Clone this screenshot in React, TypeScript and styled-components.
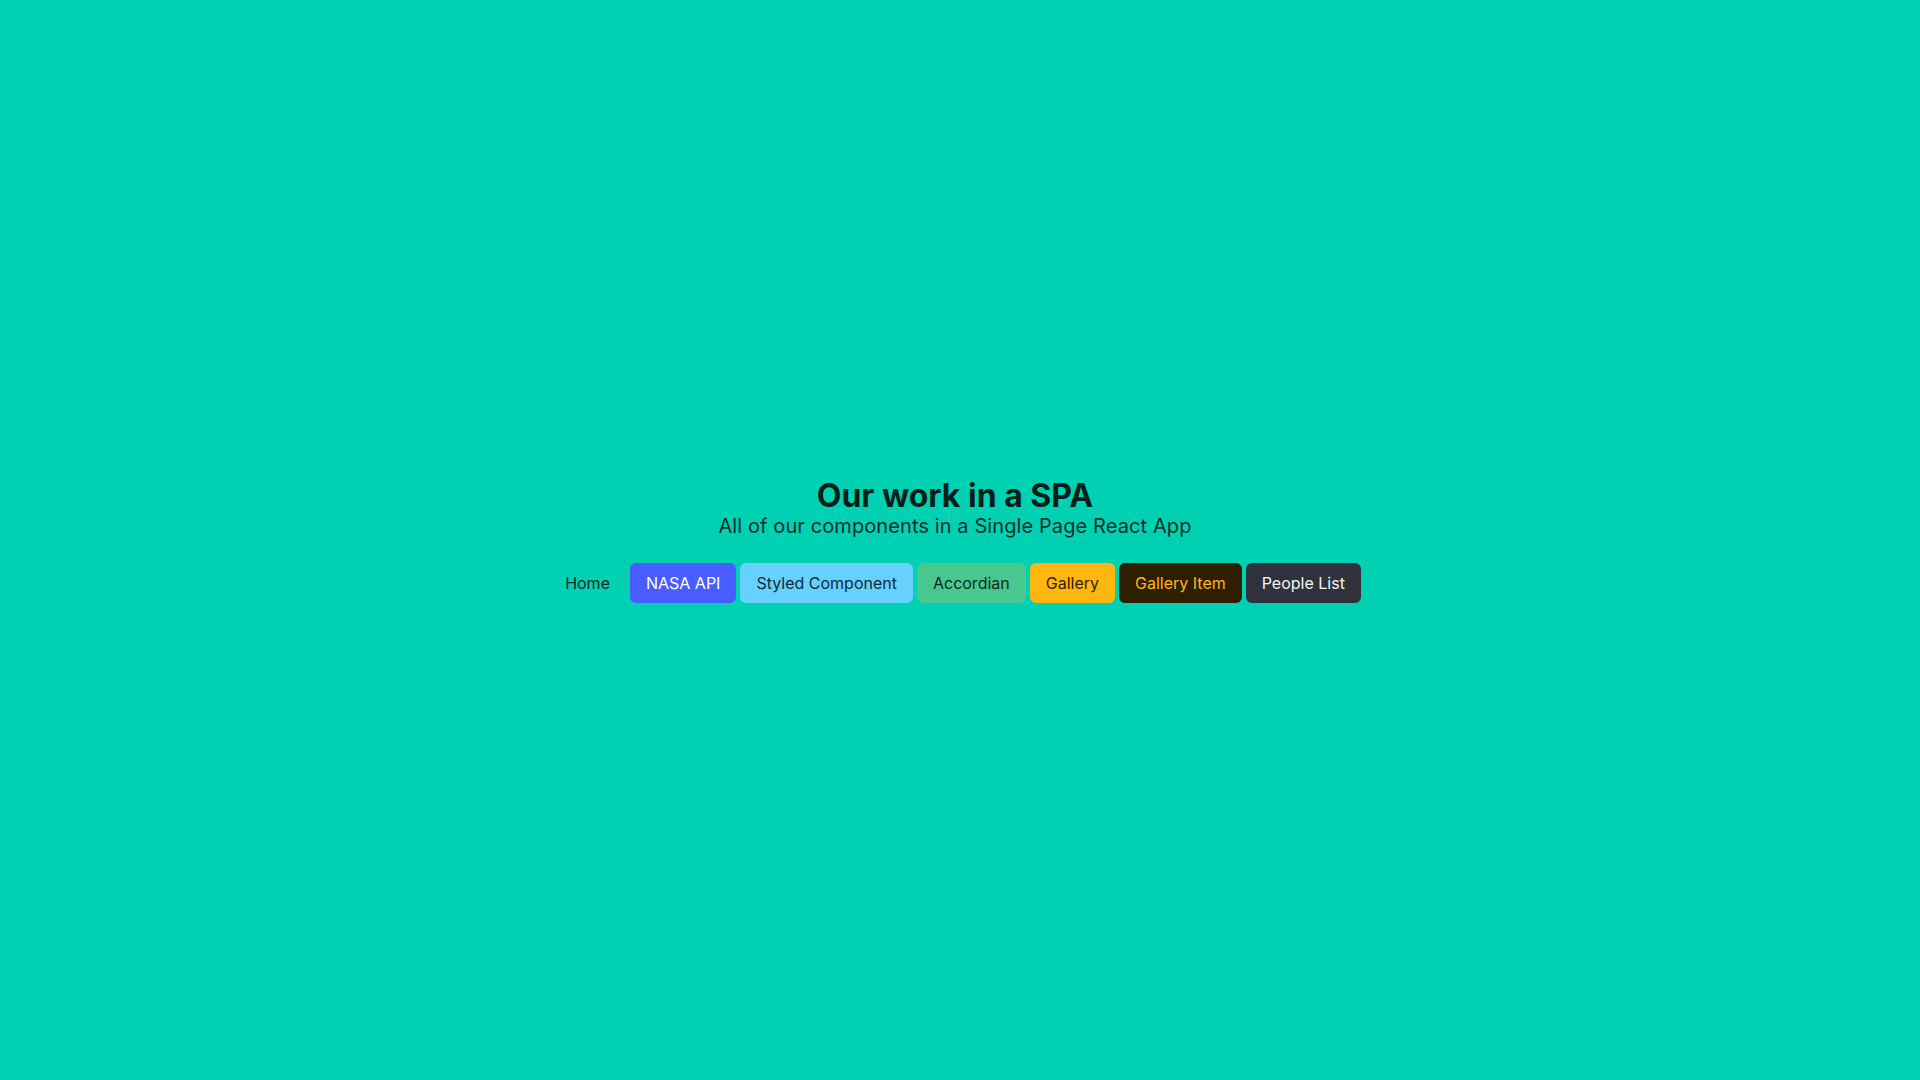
import React from "react";
import styled, { createGlobalStyle } from "styled-components";

const GlobalStyle = createGlobalStyle`
  html, body {
    margin: 0;
    padding: 0;
    background: #00d1b2;
  }
  body {
    font-family: Inter, "Noto Sans", "Liberation Sans", sans-serif;
    color: #042621;
  }
`;

const Page = styled.main`
  min-height: 100vh;
  box-sizing: border-box;
  display: flex;
  flex-direction: column;
  align-items: center;
  justify-content: center;
  padding-right: 10px;
`;

const Title = styled.h1`
  margin: 0;
  font-size: 32px;
  line-height: 38px;
  font-weight: 700;
  color: #021f1a;
`;

const Subtitle = styled.p`
  margin: -2.5px 0 0;
  font-size: 20px;
  line-height: 26px;
  font-weight: 400;
  letter-spacing: 0.1px;
  color: #06302a;
`;

const Nav = styled.nav`
  margin-top: 24px;
  display: flex;
  gap: 4px;
`;

const NavButton = styled.a<{ $bg: string; $fg: string }>`
  display: flex;
  align-items: center;
  height: 40px;
  padding: 0 16px;
  border-radius: 6px;
  font-size: 16px;
  font-weight: 400;
  background: ${(p) => p.$bg};
  color: ${(p) => p.$fg};
  text-decoration: none;
  cursor: pointer;
  white-space: nowrap;
`;

const links = [
  { label: "Home", bg: "transparent", fg: "#082a25" },
  { label: "NASA API", bg: "#485cff", fg: "#ffffff" },
  { label: "Styled Component", bg: "#66d1ff", fg: "#122a36" },
  { label: "Accordian", bg: "#48c78e", fg: "#0c2a1e" },
  { label: "Gallery", bg: "#ffb70f", fg: "#2e2000" },
  { label: "Gallery Item", bg: "#2d1f00", fg: "#ffb70f" },
  { label: "People List", bg: "#2f313d", fg: "#f3f3f5" },
];

export default function App() {
  return (
    <>
      <GlobalStyle />
      <Page>
        <Title>Our work in a SPA</Title>
        <Subtitle>All of our components in a Single Page React App</Subtitle>
        <Nav>
          {links.map((l) => (
            <NavButton key={l.label} $bg={l.bg} $fg={l.fg}>
              {l.label}
            </NavButton>
          ))}
        </Nav>
      </Page>
    </>
  );
}
